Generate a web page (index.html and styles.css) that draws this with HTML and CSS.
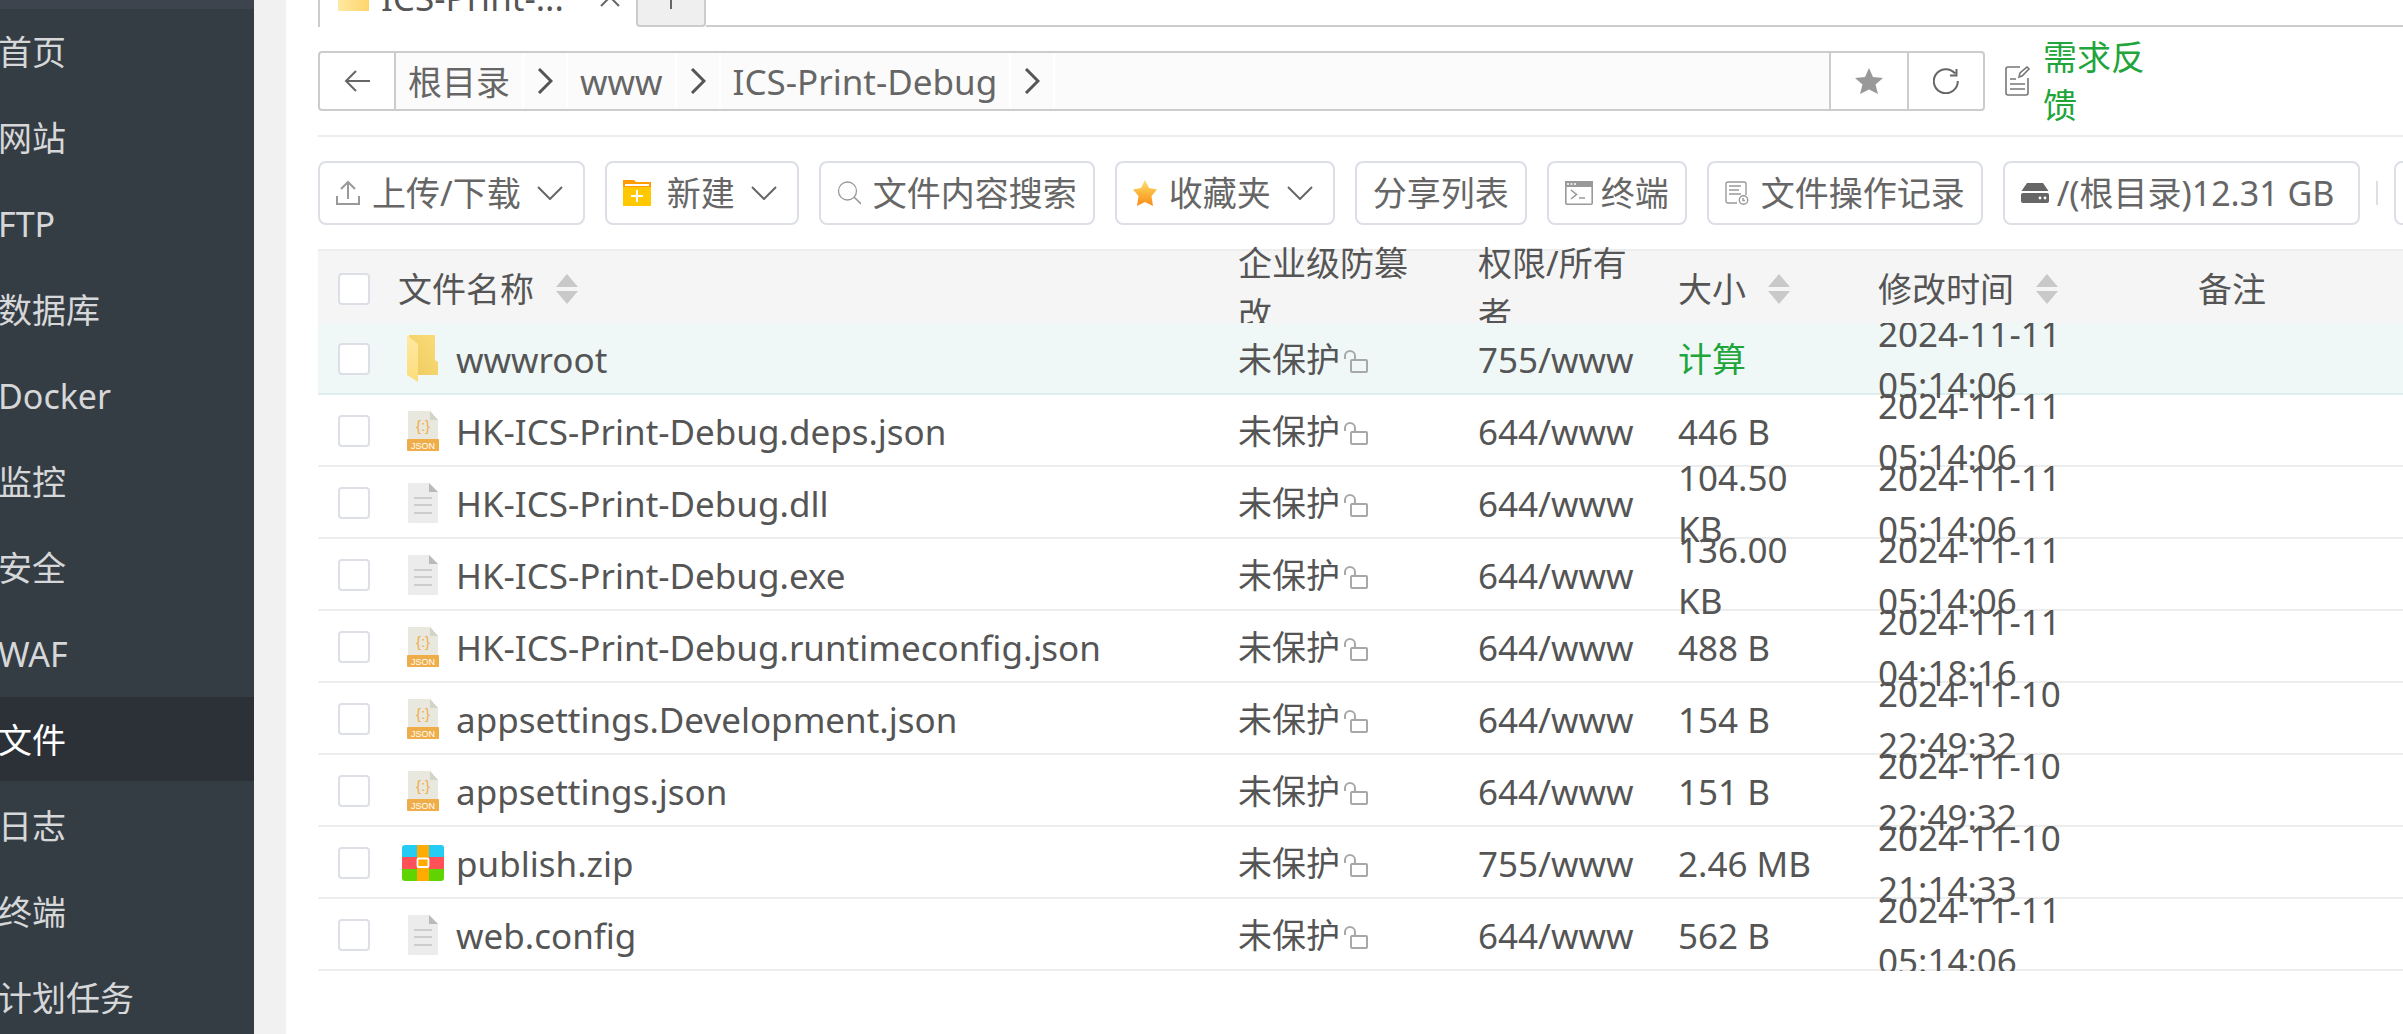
FILE: index.html
```html
<!DOCTYPE html>
<html lang="zh-CN">
<head>
<meta charset="utf-8">
<title>文件</title>
<link rel="stylesheet" href="styles.css">
</head>
<body>
<svg class="sprite" aria-hidden="true">
  <defs>
    <linearGradient id="g-fold" x1="0" y1="1" x2="1" y2="0"><stop offset="0" stop-color="#eccb5f"/><stop offset="1" stop-color="#fbdc78"/></linearGradient>
    <linearGradient id="g-flap" x1="0" y1="0" x2="0" y2="1"><stop offset="0" stop-color="#ffe9a2"/><stop offset="1" stop-color="#fcdc7c"/></linearGradient>
    <linearGradient id="g-star" x1="0" y1="0" x2="0" y2="1"><stop offset="0" stop-color="#fce07a"/><stop offset=".5" stop-color="#fbb63a"/><stop offset="1" stop-color="#fb8c1c"/></linearGradient>
    <linearGradient id="g-tab" x1="0" y1="0" x2="1" y2="0"><stop offset="0" stop-color="#ffe9a2"/><stop offset="1" stop-color="#fdd56b"/></linearGradient>
  </defs>
  <symbol id="i-folder" viewBox="0 0 32 48">
    <path d="M2 0h26v25l3 2v13H2z" fill="url(#g-fold)"/>
    <path d="M0 0l11 9v38L0 40z" fill="url(#g-flap)"/>
  </symbol>
  <symbol id="i-json" viewBox="0 0 32 40">
    <path d="M1 0h22l8 9v19H1z" fill="#e8e8de"/><path d="M23 0l8 9h-8z" fill="#d3d3c6"/>
    <rect y="28" width="32" height="12" rx="1" fill="#efad49"/>
    <text x="16" y="20" font-size="15" text-anchor="middle" fill="#efad49" font-family="Liberation Sans, sans-serif">{:}</text>
    <text x="16" y="37.500" font-size="9" text-anchor="middle" fill="#fff" font-family="Liberation Sans, sans-serif">JSON</text>
  </symbol>
  <symbol id="i-doc" viewBox="0 0 32 40">
    <path d="M2 0h20l9 9v31H2a1 1 0 0 1-1-1V1a1 1 0 0 1 1-1z" fill="#ececec"/><path d="M22 0l9 9h-9z" fill="#b9b9b9"/>
    <path d="M7 15h18M7 22h18M7 30h18" stroke="#cdcdcd" stroke-width="2"/>
  </symbol>
  <symbol id="i-zip" viewBox="0 0 42 36">
    <path d="M0 12V3a3 3 0 0 1 3-3h36a3 3 0 0 1 3 3v9z" fill="#24cbf3"/>
    <path d="M0 12h42v12H0z" fill="#ff5157"/>
    <path d="M0 24h42v9a3 3 0 0 1-3 3H3a3 3 0 0 1-3-3z" fill="#60d400"/>
    <path d="M15 0h12v36H15z" fill="#ffab00"/>
    <rect x="15.500" y="13.500" width="11" height="8.500" rx="1" fill="#ffab00" stroke="#fff" stroke-width="1.800"/>
  </symbol>
  <symbol id="i-lock" viewBox="0 0 24 24">
    <g fill="none" stroke="#a8a8a8" stroke-width="2"><rect x="7" y="10" width="16" height="12" rx="1"/><path d="M1 9V6a5 5 0 0 1 10 0v4"/></g>
  </symbol>
  <symbol id="i-sort" viewBox="0 0 22 30"><path d="M11 0l11 13H0zM11 30l11-13H0z" fill="#c9c9c9"/></symbol>
  <symbol id="i-down" viewBox="0 0 26 14"><path d="M1 1l12 12L25 1" fill="none" stroke="#666" stroke-width="2"/></symbol>
  <symbol id="i-next" viewBox="0 0 16 26"><path d="M2 1l12 12L2 25" fill="none" stroke="#555" stroke-width="3"/></symbol>
</svg>

<div class="app">
  <nav class="sidebar">
    <a href="#">首页</a>
    <a href="#">网站</a>
    <a href="#">FTP</a>
    <a href="#">数据库</a>
    <a href="#">Docker</a>
    <a href="#">监控</a>
    <a href="#">安全</a>
    <a href="#">WAF</a>
    <a href="#" class="active" aria-current="page">文件</a>
    <a href="#">日志</a>
    <a href="#">终端</a>
    <a href="#">计划任务</a>
  </nav>

  <main class="main">
    <div class="tabs">
      <div class="tab">
        <svg class="tab-folder" viewBox="0 0 31 28"><path d="M0 2a2 2 0 0 1 2-2h9l3 4h15a2 2 0 0 1 2 2v22H0z" fill="url(#g-tab)"/></svg>
        <span class="tab-name">ICS-Print-...</span>
        <button class="tab-close" aria-label="关闭"><svg width="20" height="20" viewBox="0 0 20 20"><path d="M1 1l18 18M19 1L1 19" stroke="#666" stroke-width="2"/></svg></button>
      </div>
      <button class="tab-add" aria-label="新标签"><svg width="24" height="24" viewBox="0 0 24 24"><path d="M12 0v24M0 12h24" stroke="#666" stroke-width="2"/></svg></button>
    </div>

    <div class="path-row">
      <div class="path">
        <button class="path-btn" aria-label="返回"><svg width="26" height="22" viewBox="0 0 26 22"><path d="M26 11H2M12 1L2 11l10 10" fill="none" stroke="#666" stroke-width="2"/></svg></button>
        <div class="crumbs">
          <a href="#">根目录</a><span class="sep"><svg width="16" height="26"><use href="#i-next"/></svg></span>
          <a href="#" class="latin">www</a><span class="sep"><svg width="16" height="26"><use href="#i-next"/></svg></span>
          <a href="#" class="latin">ICS-Print-Debug</a><span class="sep"><svg width="16" height="26"><use href="#i-next"/></svg></span>
        </div>
        <button class="path-btn" aria-label="收藏"><svg width="28" height="26" viewBox="0 0 28 26"><path d="M14 0l4 9 10 1-7.500 6.500L23 26l-9-4.500L5 26l2.500-9.500L0 10l10-1z" fill="#999"/></svg></button>
        <button class="path-btn" aria-label="刷新"><svg width="26" height="26" viewBox="0 0 26 26"><path d="M24.800 13A12 12 0 1 1 22 5.500M23.500 1v6.500H17" fill="none" stroke="#666" stroke-width="2"/></svg></button>
      </div>
      <a href="#" class="feedback">
        <svg width="26" height="30" viewBox="0 0 26 30"><g fill="none" stroke="#777" stroke-width="1.600"><path d="M15 1H3a2 2 0 0 0-2 2v24a2 2 0 0 0 2 2h18a2 2 0 0 0 2-2V12"/><path d="M5 13h6M5 18h15M5 23h15M14 11l1-4 7-6 2 2-7 7z"/></g></svg>
        <span>需求反馈</span>
      </a>
    </div>

    <hr>

    <div class="toolbar">
      <button class="btn"><svg width="24" height="26" viewBox="0 0 24 26"><path d="M12 19V2M5 9l7-7 7 7M1 16v8h22v-8" fill="none" stroke="#999" stroke-width="2"/></svg><span>上传/下载</span><svg class="caret" width="26" height="14"><use href="#i-down"/></svg></button>
      <button class="btn wide"><svg width="28" height="26" viewBox="0 0 28 26"><path d="M0 0h11l2 2h15v8H0z" fill="#ff9c00"/><path d="M0 7h28v19H0z" fill="#ffc800"/><path d="M2 4h24v2H2z" fill="#fff"/><path d="M14 10v12M8 16h12" stroke="#fff" stroke-width="2"/></svg><span>新建</span><svg class="caret" width="26" height="14"><use href="#i-down"/></svg></button>
      <button class="btn"><svg width="24" height="24" viewBox="0 0 24 24"><circle cx="10.500" cy="10" r="9" fill="none" stroke="#999" stroke-width="1.300"/><path d="M17 16l7 7" stroke="#999" stroke-width="1.600"/></svg><span>文件内容搜索</span></button>
      <button class="btn"><svg width="24" height="26" viewBox="0 0 24 26"><path d="M12 0l4 8 8 1.500-5.500 6.500L20 26l-8-4-8 4 1.500-10L0 9.500 8 8z" fill="url(#g-star)"/></svg><span>收藏夹</span><svg class="caret" width="26" height="14"><use href="#i-down"/></svg></button>
      <button class="btn"><span>分享列表</span></button>
      <button class="btn near"><svg width="28" height="24" viewBox="0 0 28 24"><rect x=".8" y=".8" width="26.400" height="22.400" rx="1" fill="none" stroke="#999" stroke-width="1.600"/><path d="M0 0h28v6H0z" fill="#999"/><path d="M2 3h2M5.500 3h2M9 3h2" stroke="#fff" stroke-width="1.500"/><path d="M6 9l5.500 4.500L6 18M14 17h6" fill="none" stroke="#999" stroke-width="1.600"/></svg><span>终端</span></button>
      <button class="btn"><svg width="24" height="24" viewBox="0 0 24 24"><g fill="none" stroke="#999" stroke-width="1.400"><path d="M12 22H3a2 2 0 0 1-2-2V3a2 2 0 0 1 2-2h16a2 2 0 0 1 2 2v11M4 5h12M4 9h10M4 13h12"/><circle cx="18.500" cy="19" r="4.200"/><path d="M18 17v2.500h2"/></g></svg><span>文件操作记录</span></button>
      <button class="btn near disk"><svg width="28" height="20" viewBox="0 0 28 20"><path d="M6 0h16l5.500 8H.5z" fill="#666"/><path d="M2 10h24a2 2 0 0 1 2 2v6a2 2 0 0 1-2 2H2a2 2 0 0 1-2-2v-6a2 2 0 0 1 2-2z" fill="#666"/><circle cx="19" cy="15" r="1.400" fill="#fff"/><circle cx="24" cy="15" r="1.400" fill="#fff"/></svg><span>/(根目录)12.31 GB</span></button>
      <span class="divider"></span>
      <button class="btn" aria-label="更多"></button>
    </div>

    <div class="files">
      <table class="grid">
        <colgroup><col class="c-check"><col class="c-name"><col class="c-guard"><col class="c-perm"><col class="c-size"><col class="c-time"><col></colgroup>
        <thead>
          <tr>
            <th><div class="cell"><input type="checkbox" aria-label="全选"></div></th>
            <th><div class="cell sortable">文件名称<svg width="22" height="30"><use href="#i-sort"/></svg></div></th>
            <th><div class="cell">企业级防篡改</div></th>
            <th><div class="cell">权限/所有者</div></th>
            <th><div class="cell sortable">大小<svg width="22" height="30"><use href="#i-sort"/></svg></div></th>
            <th><div class="cell sortable">修改时间<svg width="22" height="30"><use href="#i-sort"/></svg></div></th>
            <th><div class="cell">备注</div></th>
          </tr>
        </thead>
      </table>
      <div class="rows">
      <table class="grid">
        <colgroup><col class="c-check"><col class="c-name"><col class="c-guard"><col class="c-perm"><col class="c-size"><col class="c-time"><col></colgroup>
        <tbody>
          <tr class="hover">
            <td><div class="cell"><input type="checkbox" aria-label="wwwroot"></div></td>
            <td><div class="cell latin"><span class="ico"><svg width="32" height="48"><use href="#i-folder"/></svg></span>wwwroot</div></td>
            <td><div class="cell guard">未保护<svg width="24" height="24"><use href="#i-lock"/></svg></div></td>
            <td><div class="cell latin">755/www</div></td>
            <td><div class="cell"><a href="#">计算</a></div></td>
            <td><div class="cell latin">2024-11-11 05:14:06</div></td>
            <td></td>
          </tr>
          <tr>
            <td><div class="cell"><input type="checkbox" aria-label="HK-ICS-Print-Debug.deps.json"></div></td>
            <td><div class="cell latin"><span class="ico"><svg width="32" height="40"><use href="#i-json"/></svg></span>HK-ICS-Print-Debug.deps.json</div></td>
            <td><div class="cell guard">未保护<svg width="24" height="24"><use href="#i-lock"/></svg></div></td>
            <td><div class="cell latin">644/www</div></td>
            <td><div class="cell latin">446 B</div></td>
            <td><div class="cell latin">2024-11-11 05:14:06</div></td>
            <td></td>
          </tr>
          <tr>
            <td><div class="cell"><input type="checkbox" aria-label="HK-ICS-Print-Debug.dll"></div></td>
            <td><div class="cell latin"><span class="ico"><svg width="32" height="40"><use href="#i-doc"/></svg></span>HK-ICS-Print-Debug.dll</div></td>
            <td><div class="cell guard">未保护<svg width="24" height="24"><use href="#i-lock"/></svg></div></td>
            <td><div class="cell latin">644/www</div></td>
            <td><div class="cell latin">104.50<br>KB</div></td>
            <td><div class="cell latin">2024-11-11 05:14:06</div></td>
            <td></td>
          </tr>
          <tr>
            <td><div class="cell"><input type="checkbox" aria-label="HK-ICS-Print-Debug.exe"></div></td>
            <td><div class="cell latin"><span class="ico"><svg width="32" height="40"><use href="#i-doc"/></svg></span>HK-ICS-Print-Debug.exe</div></td>
            <td><div class="cell guard">未保护<svg width="24" height="24"><use href="#i-lock"/></svg></div></td>
            <td><div class="cell latin">644/www</div></td>
            <td><div class="cell latin">136.00<br>KB</div></td>
            <td><div class="cell latin">2024-11-11 05:14:06</div></td>
            <td></td>
          </tr>
          <tr>
            <td><div class="cell"><input type="checkbox" aria-label="HK-ICS-Print-Debug.runtimeconfig.json"></div></td>
            <td><div class="cell latin"><span class="ico"><svg width="32" height="40"><use href="#i-json"/></svg></span>HK-ICS-Print-Debug.runtimeconfig.json</div></td>
            <td><div class="cell guard">未保护<svg width="24" height="24"><use href="#i-lock"/></svg></div></td>
            <td><div class="cell latin">644/www</div></td>
            <td><div class="cell latin">488 B</div></td>
            <td><div class="cell latin">2024-11-11 04:18:16</div></td>
            <td></td>
          </tr>
          <tr>
            <td><div class="cell"><input type="checkbox" aria-label="appsettings.Development.json"></div></td>
            <td><div class="cell latin"><span class="ico"><svg width="32" height="40"><use href="#i-json"/></svg></span>appsettings.Development.json</div></td>
            <td><div class="cell guard">未保护<svg width="24" height="24"><use href="#i-lock"/></svg></div></td>
            <td><div class="cell latin">644/www</div></td>
            <td><div class="cell latin">154 B</div></td>
            <td><div class="cell latin">2024-11-10 22:49:32</div></td>
            <td></td>
          </tr>
          <tr>
            <td><div class="cell"><input type="checkbox" aria-label="appsettings.json"></div></td>
            <td><div class="cell latin"><span class="ico"><svg width="32" height="40"><use href="#i-json"/></svg></span>appsettings.json</div></td>
            <td><div class="cell guard">未保护<svg width="24" height="24"><use href="#i-lock"/></svg></div></td>
            <td><div class="cell latin">644/www</div></td>
            <td><div class="cell latin">151 B</div></td>
            <td><div class="cell latin">2024-11-10 22:49:32</div></td>
            <td></td>
          </tr>
          <tr>
            <td><div class="cell"><input type="checkbox" aria-label="publish.zip"></div></td>
            <td><div class="cell latin"><span class="ico"><svg width="42" height="36"><use href="#i-zip"/></svg></span>publish.zip</div></td>
            <td><div class="cell guard">未保护<svg width="24" height="24"><use href="#i-lock"/></svg></div></td>
            <td><div class="cell latin">755/www</div></td>
            <td><div class="cell latin">2.46 MB</div></td>
            <td><div class="cell latin">2024-11-10 21:14:33</div></td>
            <td></td>
          </tr>
          <tr>
            <td><div class="cell"><input type="checkbox" aria-label="web.config"></div></td>
            <td><div class="cell latin"><span class="ico"><svg width="32" height="40"><use href="#i-doc"/></svg></span>web.config</div></td>
            <td><div class="cell guard">未保护<svg width="24" height="24"><use href="#i-lock"/></svg></div></td>
            <td><div class="cell latin">644/www</div></td>
            <td><div class="cell latin">562 B</div></td>
            <td><div class="cell latin">2024-11-11 05:14:06</div></td>
            <td></td>
          </tr>
        </tbody>
      </table>
      </div>
    </div>
  </main>
</div>
</body>
</html>
```

FILE: styles.css
```css
* { box-sizing: border-box; }

html, body { height: 100%; }

body {
  margin: 0;
  overflow: hidden;
  background: #f1f1f1;
  color: #555;
  font-family: "Noto Sans", "Noto Sans CJK SC", sans-serif;
  font-size: 34px;
  line-height: 51px;
}

a { color: inherit; text-decoration: none; }

button {
  margin: 0;
  padding: 0;
  border: 0;
  background: none;
  color: inherit;
  font: inherit;
}

svg { display: block; flex: none; }

.sprite { position: absolute; width: 0; height: 0; }

.latin { font-size: 35px; }

.app {
  display: flex;
  gap: 32px;
  min-height: 100%;
}

/* Side navigation */
.sidebar {
  flex: none;
  display: flex;
  flex-direction: column;
  gap: 2px;
  width: 254px;
  border-top: 9px solid #3d444e;
  background: #353d44;
  color: #d6d7d9;
}

.sidebar a {
  height: 84px;
  line-height: 86px;
  text-indent: -2px;
}

.sidebar .active { background: #2c3138; color: #fff; }

/* Content */
.main {
  flex: 1;
  min-width: 0;
  display: flex;
  flex-direction: column;
  gap: 24px;
  padding-left: 32px;
  background: #fff;
}

/* Tabs, partly scrolled off the top */
.tabs {
  display: flex;
  height: 60px;
  margin-top: -33px;
}

.tabs::after {
  content: "";
  flex: 1;
  border-bottom: 2px solid #ccc;
}

.tab {
  display: flex;
  align-items: center;
  width: 318px;
  padding: 0 16px 0 18px;
  border-left: 2px solid #ccc;
  font-size: 35px;
}

.tab-folder { width: 31px; height: 28px; }
.tab-name { flex: 1; padding-left: 12px; }

.tab-add {
  display: flex;
  align-items: center;
  justify-content: center;
  width: 70px;
  border: 2px solid #ccc;
  border-radius: 4px;
  background: #efefef;
}

/* Path bar */
.path-row {
  display: flex;
  align-items: center;
  gap: 20px;
  height: 60px;
  padding-right: 250px;
}

.path {
  flex: 1;
  display: flex;
  height: 60px;
  border: 2px solid #ccc;
  border-radius: 4px;
}

.path-btn {
  flex: none;
  display: flex;
  align-items: center;
  justify-content: center;
  width: 76px;
}

.path-btn:first-child { width: 74px; }
.path-btn + .path-btn { border-left: 2px solid #ccc; }

.crumbs {
  flex: 1;
  display: flex;
  border: solid #ccc;
  border-width: 0 2px;
  background: #fbfbfb;
  color: #666;
}

.crumbs a {
  padding: 0 12px;
  border-right: 2px solid #fff;
  line-height: 58px;
}

.sep {
  display: flex;
  align-items: center;
  justify-content: center;
  width: 44px;
  border-right: 2px solid #fff;
}

.feedback {
  display: flex;
  align-items: center;
  gap: 12px;
  width: 148px;
  color: #20a53a;
  line-height: 48px;
}

hr {
  width: 100%;
  height: 2px;
  margin: 0;
  border: 0;
  background: #ededed;
}

/* Toolbar */
.toolbar {
  display: flex;
  align-items: center;
  gap: 20px;
  overflow: hidden;
  color: #666;
}

.btn {
  flex: none;
  display: flex;
  align-items: center;
  gap: 12px;
  height: 64px;
  padding: 0 16px;
  border: 2px solid #dcdfe6;
  border-radius: 8px;
  white-space: nowrap;
}

.btn.wide { gap: 16px; }
.btn.near { gap: 8px; }
.btn.disk { padding-right: 24px; }
.btn .caret { margin: 0 4px; }
.btn.wide .caret { margin-left: 0; }

.divider {
  flex: none;
  width: 2px;
  height: 24px;
  margin-right: -4px;
  margin-left: -4px;
  background: #dcdfe6;
}

/* File list */
.grid {
  width: 100%;
  table-layout: fixed;
  border-collapse: collapse;
}

.c-check { width: 60px; }
.c-name { width: 840px; }
.c-guard { width: 240px; }
.c-perm { width: 200px; }
.c-size { width: 200px; }
.c-time { width: 320px; }

th, td {
  padding: 0 20px;
  text-align: left;
  font-weight: 400;
}

/* Two-line values spill over the fixed row height */
.cell {
  display: flex;
  align-items: center;
  height: 70px;
  padding-top: 2px;
}

thead .cell { height: 74px; padding-top: 6px; }

thead tr {
  background: #f5f5f5;
  box-shadow: inset 0 2px #ededed;
}

.sortable { gap: 22px; }
.guard { gap: 4px; }
.guard svg { margin-top: 6px; }

.rows {
  position: relative;
  overflow: hidden;
  background: #fff;
}

.rows tr { box-shadow: inset 0 -2px #ededed; }
.rows td { height: 72px; padding-bottom: 2px; }
.rows .hover { background: #eff8f7; box-shadow: inset 0 -2px #dcefec; }
.rows a { color: #20a53a; }

.ico {
  display: flex;
  justify-content: center;
  width: 50px;
  margin-right: 8px;
}

input[type="checkbox"] {
  appearance: none;
  flex: none;
  width: 32px;
  height: 32px;
  margin: 0;
  border: 2px solid #dcdfe6;
  border-radius: 4px;
  background: #fff;
}
```
